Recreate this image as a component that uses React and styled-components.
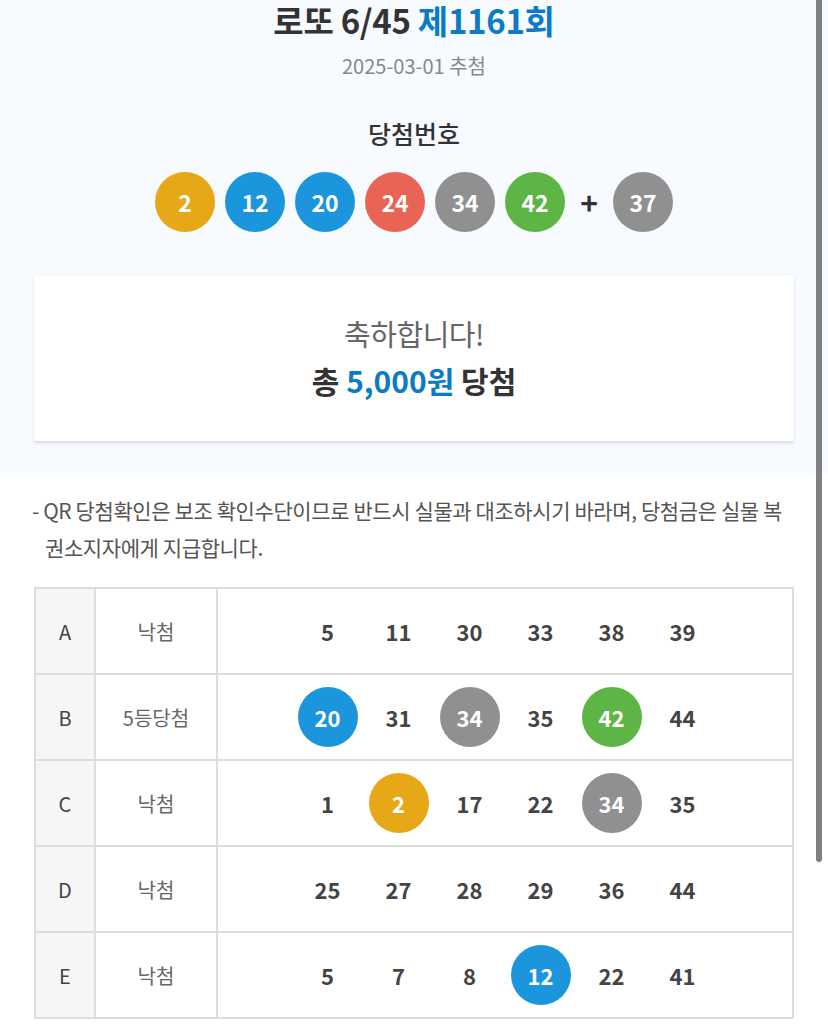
import React from 'react';
import styled, {createGlobalStyle} from 'styled-components';

const GlobalStyle = createGlobalStyle`
  html, body {
    margin: 0;
    padding: 0;
    overflow: hidden;
    background: #fff;
    font-family: "Noto Sans CJK KR", "Noto Sans", sans-serif;
    color: #333;
  }
`

const Page = styled.div`
  width: 828px;
`

const Summary = styled.section`
  background-color: #f7fafe;
  padding: 0 34px 34px;
  display: flex;
  flex-direction: column;
  align-items: center;
`

const Title = styled.h1`
  margin: 0;
  font-size: 33px;
  line-height: 40px;
  font-weight: 700;
  color: #333;
  letter-spacing: -0.3px;
`

const Blue = styled.span`
  color: #0b7bc6;
`

const DrawDate = styled.div`
  margin-top: 12px;
  font-size: 20px;
  line-height: 28px;
  color: #888;
`

const Label = styled.h2`
  margin: 37px 0 0;
  font-size: 25px;
  line-height: 32px;
  font-weight: 500;
  color: #333;
`

const BallRow = styled.div`
  margin-top: 23px;
  display: flex;
  align-items: center;
  gap: 10px;
`

const ballColor = n => {
  if (n <= 10) return '#e6a817'
  if (n <= 20) return '#1b96dc'
  if (n <= 30) return '#e96454'
  if (n <= 40) return '#909090'
  return '#5db546'
}

const Ball = styled.span`
  width: 60px;
  height: 60px;
  border-radius: 50%;
  background-color: ${p => ballColor(p.$n)};
  color: #fff;
  font-size: 23px;
  font-weight: 700;
  display: flex;
  align-items: center;
  justify-content: center;
  flex-shrink: 0;
`

const Plus = styled.span`
  width: 28px;
  text-align: center;
  font-size: 30px;
  font-weight: 700;
  color: #333;
  line-height: 60px;
`

const Card = styled.div`
  margin-top: 44px;
  align-self: stretch;
  background: #fff;
  box-shadow: 0 2px 3px rgba(0, 0, 0, 0.13);
  padding: 39px 0 43px;
  text-align: center;
`

const Congrats = styled.div`
  font-size: 29px;
  line-height: 36px;
  color: #666;
  letter-spacing: -0.5px;
`

const Prize = styled.div`
  margin-top: 11px;
  font-size: 30px;
  line-height: 36px;
  font-weight: 700;
  color: #333;
`

const Details = styled.section`
  padding: 17px 34px 40px;
`

const Notice = styled.p`
  margin: 0 0 21px -2px;
  padding-left: 13px;
  text-indent: -13px;
  font-size: 21px;
  line-height: 37px;
  color: #555;
  letter-spacing: -0.4px;
`

const Table = styled.table`
  width: 100%;
  border-collapse: collapse;
  border: 2px solid #ddd;
`

const Cell = styled.td`
  border: 2px solid #ddd;
  height: 84px;
  padding: 0;
  text-align: center;
  vertical-align: middle;
`

const KeyCell = styled(Cell)`
  width: 58px;
  background: #f6f6f6;
  font-size: 20px;
  color: #444;
`

const ResultCell = styled(Cell)`
  width: 120px;
  font-size: 20px;
  color: #666;
`

const Numbers = styled.div`
  display: flex;
  justify-content: center;
  gap: 11px;
`

const Num = styled.span`
  width: 60px;
  height: 60px;
  border-radius: 50%;
  display: flex;
  align-items: center;
  justify-content: center;
  font-size: 22px;
  font-weight: 700;
  color: ${p => (p.$hit ? '#fff' : '#444')};
  background-color: ${p => (p.$hit ? ballColor(p.$n) : 'transparent')};
`

const Scrollbar = styled.div`
  position: fixed;
  top: 0;
  right: 6px;
  width: 6px;
  height: 862px;
  background: #808080;
  border-radius: 0 0 3px 3px;
`

const winning = [2, 12, 20, 24, 34, 42]
const bonus = 37

const games = [
  {key: 'A', result: '낙첨', nums: [5, 11, 30, 33, 38, 39]},
  {key: 'B', result: '5등당첨', nums: [20, 31, 34, 35, 42, 44]},
  {key: 'C', result: '낙첨', nums: [1, 2, 17, 22, 34, 35]},
  {key: 'D', result: '낙첨', nums: [25, 27, 28, 29, 36, 44]},
  {key: 'E', result: '낙첨', nums: [5, 7, 8, 12, 22, 41]},
]

const App = () => {
  return (
    <Page>
      <GlobalStyle />
      <Summary>
        <Title>로또 6/45 <Blue>제1161회</Blue></Title>
        <DrawDate>2025-03-01 추첨</DrawDate>
        <Label>당첨번호</Label>
        <BallRow>
          {winning.map(n => <Ball key={n} $n={n}>{n}</Ball>)}
          <Plus>+</Plus>
          <Ball $n={bonus}>{bonus}</Ball>
        </BallRow>
        <Card>
          <Congrats>축하합니다!</Congrats>
          <Prize>총 <Blue>5,000원</Blue> 당첨</Prize>
        </Card>
      </Summary>
      <Details>
        <Notice>- QR 당첨확인은 보조 확인수단이므로 반드시 실물과 대조하시기 바라며, 당첨금은 실물 복권소지자에게 지급합니다.</Notice>
        <Table>
          <tbody>
            {games.map(g => (
              <tr key={g.key}>
                <KeyCell>{g.key}</KeyCell>
                <ResultCell>{g.result}</ResultCell>
                <Cell>
                  <Numbers>
                    {g.nums.map(n => (
                      <Num key={n} $n={n} $hit={winning.includes(n)}>{n}</Num>
                    ))}
                  </Numbers>
                </Cell>
              </tr>
            ))}
          </tbody>
        </Table>
      </Details>
      <Scrollbar />
    </Page>
  );
}

export default App;
